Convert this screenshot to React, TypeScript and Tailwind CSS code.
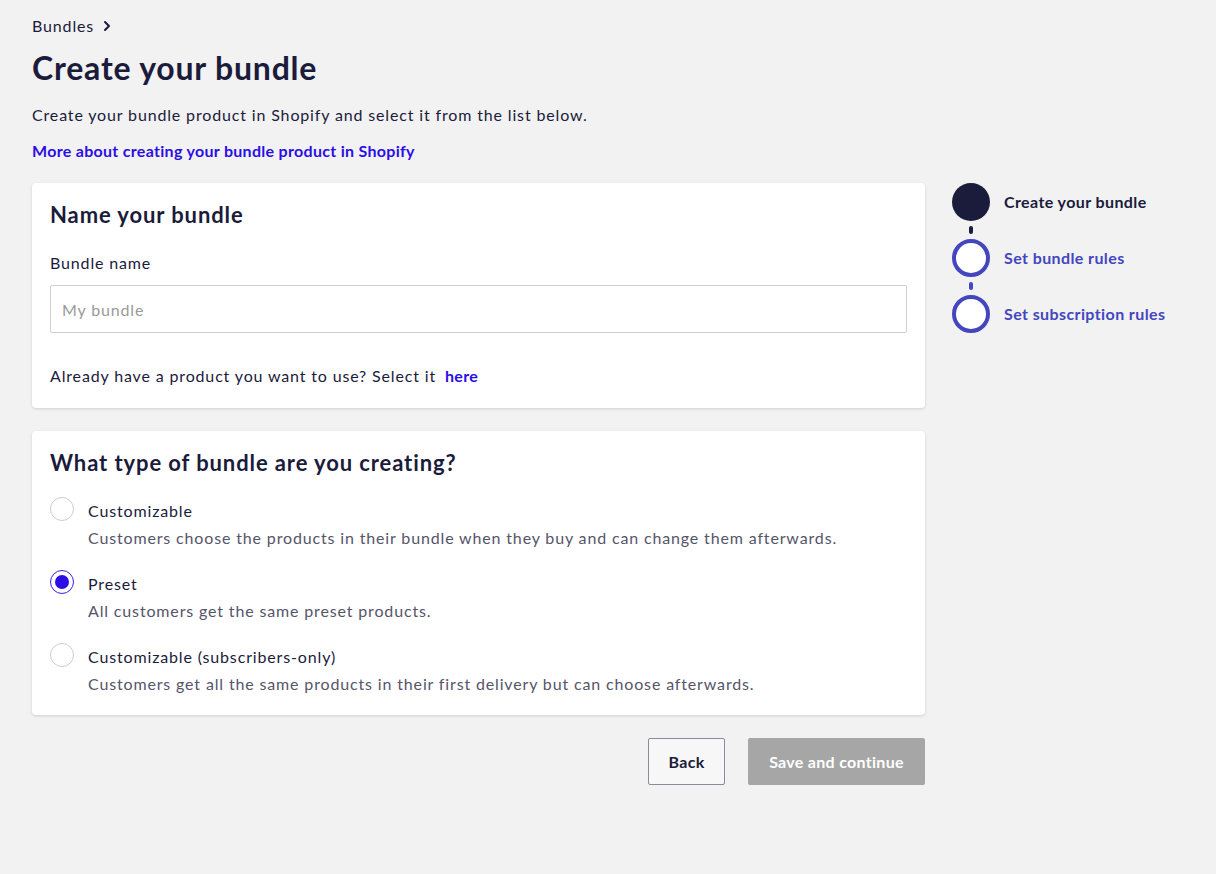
import React, { useState } from 'react';

type BundleType = 'customizable' | 'preset' | 'subscribers';

const OPTIONS: { id: BundleType; label: string; description: string }[] = [
  {
    id: 'customizable',
    label: 'Customizable',
    description: 'Customers choose the products in their bundle when they buy and can change them afterwards.',
  },
  {
    id: 'preset',
    label: 'Preset',
    description: 'All customers get the same preset products.',
  },
  {
    id: 'subscribers',
    label: 'Customizable (subscribers-only)',
    description: 'Customers get all the same products in their first delivery but can choose afterwards.',
  },
];

const STEPS = ['Create your bundle', 'Set bundle rules', 'Set subscription rules'];

const App: React.FC = () => {
  const [bundleType, setBundleType] = useState<BundleType>('preset');
  const [name, setName] = useState('');

  return (
    <div className="min-h-screen bg-[#f2f2f2] text-[#1b1b3b] font-['Lato','Liberation_Sans',sans-serif] tracking-[0.85px]">
      <div className="pl-8 pr-12 pt-[14px]">
        {/* Breadcrumb */}
        <div className="flex items-center gap-2 text-[16px] leading-6">
          <span>Bundles</span>
          <svg width="10" height="12" viewBox="0 0 10 12" fill="none">
            <path d="M3 2l4 4-4 4" stroke="#1b1b3b" strokeWidth="2" strokeLinecap="round" strokeLinejoin="round" />
          </svg>
        </div>

        <h1 className="mt-[10px] text-[32px] leading-[40px] font-bold tracking-[0.8px]">Create your bundle</h1>
        <p className="mt-[15px] text-[16px] leading-6">
          Create your bundle product in Shopify and select it from the list below.
        </p>
        <a href="#" className="mt-[12px] inline-block text-[16px] leading-6 font-bold tracking-[0.3px] text-[#2b0ee6]">
          More about creating your bundle product in Shopify
        </a>

        <div className="mt-[20px] flex gap-[27px]">
          {/* Main column */}
          <div className="w-[893px] flex flex-col">
            {/* Name card */}
            <div className="bg-white rounded-[4px] shadow-[0_1px_3px_rgba(0,0,0,0.15)] px-[18px] pt-[18px] pb-[20px]">
              <h2 className="text-[22px] leading-7 font-bold tracking-[0.9px]">Name your bundle</h2>
              <label className="mt-[22px] block text-[16px] leading-6">Bundle name</label>
              <input
                value={name}
                onChange={e => setName(e.target.value)}
                placeholder="My bundle"
                className="mt-[10px] w-full h-[48px] border border-[#cfcfcf] rounded-[2px] px-[11px] text-[16px] tracking-[0.85px] placeholder:text-[#9a9a9a] outline-none"
              />
              <p className="mt-[31px] text-[16px] leading-6">
                Already have a product you want to use? Select it{' '}
                <a href="#" className="ml-1 font-bold tracking-[0.3px] text-[#2b0ee6]">here</a>
              </p>
            </div>

            {/* Type card */}
            <div className="mt-[23px] bg-white rounded-[4px] shadow-[0_1px_3px_rgba(0,0,0,0.15)] px-[18px] pt-[18px] pb-[19px]">
              <h2 className="text-[22px] leading-7 font-bold tracking-[0.9px]">What type of bundle are you creating?</h2>
              <div className="mt-[22px] flex flex-col gap-[22px]">
                {OPTIONS.map(opt => {
                  const checked = bundleType === opt.id;
                  return (
                    <label key={opt.id} className="flex gap-[14px] cursor-pointer" onClick={() => setBundleType(opt.id)}>
                      <span
                        className={
                          checked
                            ? 'mt-[-2px] w-6 h-6 rounded-full border border-[#3a1cf0] flex items-center justify-center shrink-0'
                            : 'mt-[-2px] w-6 h-6 rounded-full border border-[#cccccc] shrink-0'
                        }
                      >
                        {checked && <span className="w-[14px] h-[14px] rounded-full bg-[#2b0ee6]" />}
                      </span>
                      <span className="flex flex-col">
                        <span className="text-[16px] leading-6">{opt.label}</span>
                        <span className="mt-[3px] text-[16px] leading-6 text-[#55556a]">{opt.description}</span>
                      </span>
                    </label>
                  );
                })}
              </div>
            </div>

            {/* Actions */}
            <div className="mt-[23px] flex justify-end gap-[23px]">
              <button className="h-[47px] w-[77px] bg-[#f7f7f7] border border-[#8a8a9a] rounded-[2px] text-[16px] font-bold tracking-[0.3px]">
                Back
              </button>
              <button className="h-[47px] w-[177px] bg-[#a6a6a6] rounded-[2px] text-[16px] font-bold tracking-[0.3px] text-white">
                Save and continue
              </button>
            </div>
          </div>

          {/* Stepper */}
          <div className="flex flex-col">
            {STEPS.map((step, i) => (
              <div key={step} className="flex flex-col">
                {i > 0 && (
                  <div className="w-[38px] flex justify-center py-[5px]">
                    <div className={i === 1 ? 'w-1 h-2 rounded-full bg-[#1b1b3b]' : 'w-1 h-2 rounded-full bg-[#4346be]'} />
                  </div>
                )}
                <div className="flex items-center gap-[14px]">
                  {i === 0 ? (
                    <div className="w-[38px] h-[38px] rounded-full bg-[#1b1b3b]" />
                  ) : (
                    <div className="w-[38px] h-[38px] rounded-full bg-white border-4 border-[#4346be]" />
                  )}
                  <span
                    className={
                      i === 0
                        ? 'text-[16px] font-bold tracking-[0.4px] text-[#1b1b3b]'
                        : 'text-[16px] font-bold tracking-[0.4px] text-[#4346be]'
                    }
                  >
                    {step}
                  </span>
                </div>
              </div>
            ))}
          </div>
        </div>
      </div>
    </div>
  );
};

export default App;
